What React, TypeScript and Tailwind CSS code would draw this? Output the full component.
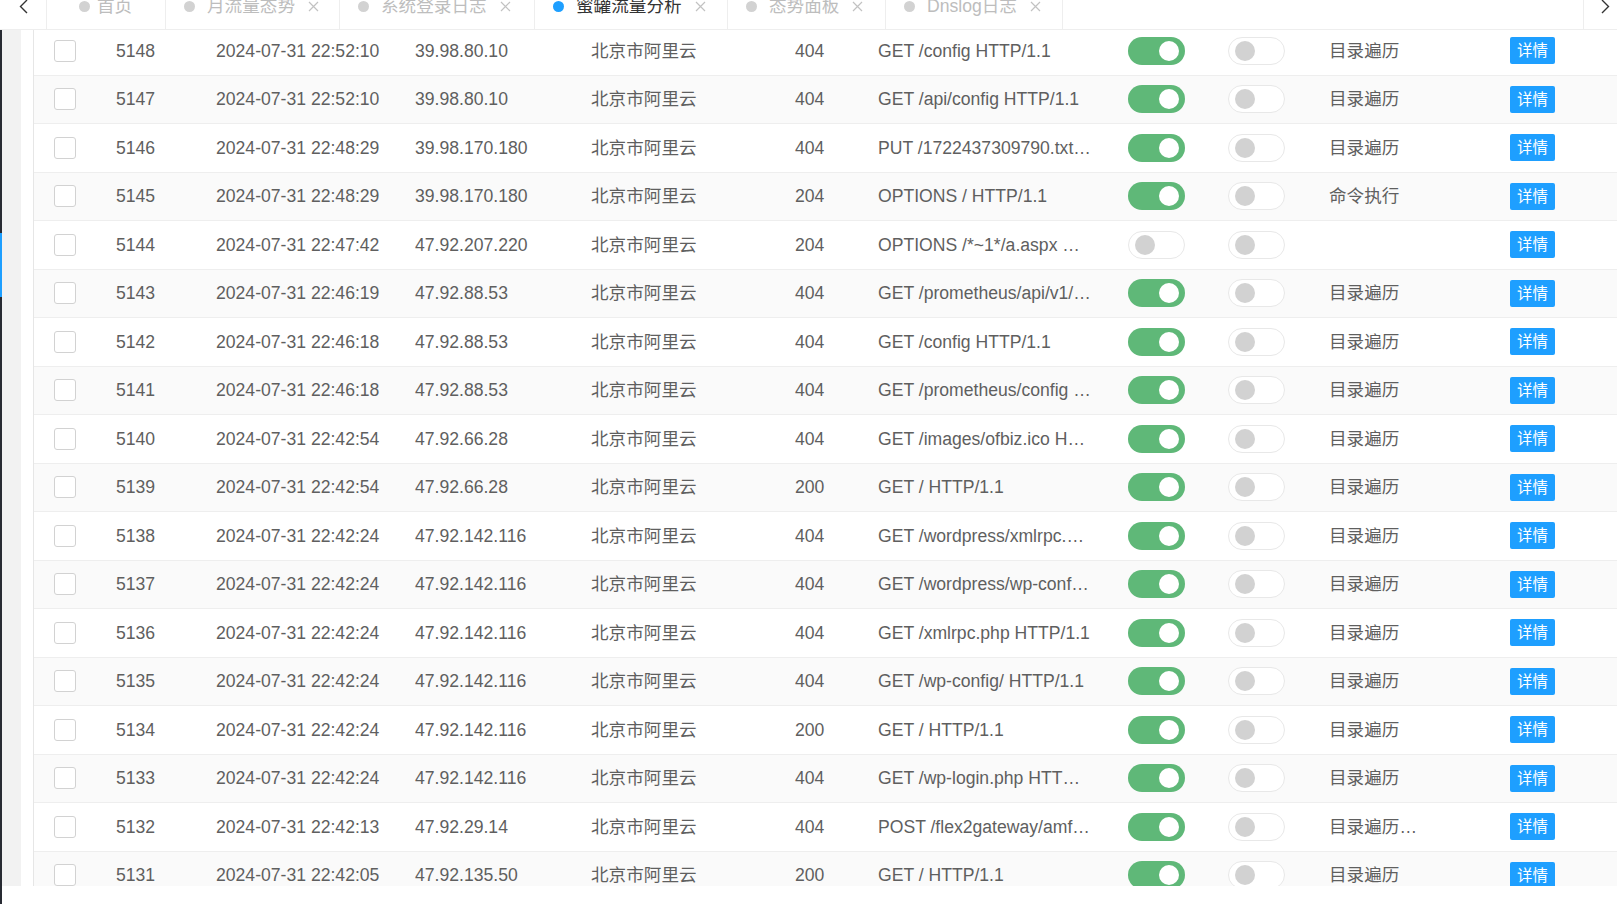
import React from "react";

type Row = {
  id: number;
  time: string;
  ip: string;
  loc: string;
  status: number;
  req: string;
  alarm: boolean;
  attack: string;
};

const rows: Row[] = [
  { id: 5148, time: "2024-07-31 22:52:10", ip: "39.98.80.10", loc: "北京市阿里云", status: 404, req: "GET /config HTTP/1.1", alarm: true, attack: "目录遍历" },
  { id: 5147, time: "2024-07-31 22:52:10", ip: "39.98.80.10", loc: "北京市阿里云", status: 404, req: "GET /api/config HTTP/1.1", alarm: true, attack: "目录遍历" },
  { id: 5146, time: "2024-07-31 22:48:29", ip: "39.98.170.180", loc: "北京市阿里云", status: 404, req: "PUT /1722437309790.txt HTTP/1.1", alarm: true, attack: "目录遍历" },
  { id: 5145, time: "2024-07-31 22:48:29", ip: "39.98.170.180", loc: "北京市阿里云", status: 204, req: "OPTIONS / HTTP/1.1", alarm: true, attack: "命令执行" },
  { id: 5144, time: "2024-07-31 22:47:42", ip: "47.92.207.220", loc: "北京市阿里云", status: 204, req: "OPTIONS /*~1*/a.aspx HTTP/1.1", alarm: false, attack: "" },
  { id: 5143, time: "2024-07-31 22:46:19", ip: "47.92.88.53", loc: "北京市阿里云", status: 404, req: "GET /prometheus/api/v1/label/__name__/values HTTP/1.1", alarm: true, attack: "目录遍历" },
  { id: 5142, time: "2024-07-31 22:46:18", ip: "47.92.88.53", loc: "北京市阿里云", status: 404, req: "GET /config HTTP/1.1", alarm: true, attack: "目录遍历" },
  { id: 5141, time: "2024-07-31 22:46:18", ip: "47.92.88.53", loc: "北京市阿里云", status: 404, req: "GET /prometheus/config HTTP/1.1", alarm: true, attack: "目录遍历" },
  { id: 5140, time: "2024-07-31 22:42:54", ip: "47.92.66.28", loc: "北京市阿里云", status: 404, req: "GET /images/ofbiz.ico HTTP/1.1", alarm: true, attack: "目录遍历" },
  { id: 5139, time: "2024-07-31 22:42:54", ip: "47.92.66.28", loc: "北京市阿里云", status: 200, req: "GET / HTTP/1.1", alarm: true, attack: "目录遍历" },
  { id: 5138, time: "2024-07-31 22:42:24", ip: "47.92.142.116", loc: "北京市阿里云", status: 404, req: "GET /wordpress/xmlrpc.php HTTP/1.1", alarm: true, attack: "目录遍历" },
  { id: 5137, time: "2024-07-31 22:42:24", ip: "47.92.142.116", loc: "北京市阿里云", status: 404, req: "GET /wordpress/wp-config.php HTTP/1.1", alarm: true, attack: "目录遍历" },
  { id: 5136, time: "2024-07-31 22:42:24", ip: "47.92.142.116", loc: "北京市阿里云", status: 404, req: "GET /xmlrpc.php HTTP/1.1", alarm: true, attack: "目录遍历" },
  { id: 5135, time: "2024-07-31 22:42:24", ip: "47.92.142.116", loc: "北京市阿里云", status: 404, req: "GET /wp-config/ HTTP/1.1", alarm: true, attack: "目录遍历" },
  { id: 5134, time: "2024-07-31 22:42:24", ip: "47.92.142.116", loc: "北京市阿里云", status: 200, req: "GET / HTTP/1.1", alarm: true, attack: "目录遍历" },
  { id: 5133, time: "2024-07-31 22:42:24", ip: "47.92.142.116", loc: "北京市阿里云", status: 404, req: "GET /wp-login.php HTTP/1.1", alarm: true, attack: "目录遍历" },
  { id: 5132, time: "2024-07-31 22:42:13", ip: "47.92.29.14", loc: "北京市阿里云", status: 404, req: "POST /flex2gateway/amf HTTP/1.1", alarm: true, attack: "目录遍历，命令执行" },
  { id: 5131, time: "2024-07-31 22:42:05", ip: "47.92.135.50", loc: "北京市阿里云", status: 200, req: "GET / HTTP/1.1", alarm: true, attack: "目录遍历" },
];

const tabs = [
  { name: "首页", width: "w-[119px]", closable: false, active: false },
  { name: "月流量态势", width: "w-[174px]", closable: true, active: false },
  { name: "系统登录日志", width: "w-[195px]", closable: true, active: false },
  { name: "蜜罐流量分析", width: "w-[193px]", closable: true, active: true },
  { name: "态势面板", width: "w-[158px]", closable: true, active: false },
  { name: "Dnslog日志", width: "w-[177px]", closable: true, active: false },
];

function Toggle({ on }: { on: boolean }) {
  if (on) {
    return (
      <div className="flex h-[28px] w-[57px] items-center justify-end rounded-full bg-[#5fb878] pr-[6px]">
        <div className="h-[20px] w-[20px] rounded-full bg-white" />
      </div>
    );
  }
  return (
    <div className="flex h-[28px] w-[57px] items-center rounded-full border border-[#e8e8e8] bg-white pl-[6px]">
      <div className="h-[20px] w-[20px] rounded-full bg-[#d2d2d2]" />
    </div>
  );
}

function CloseIcon() {
  return (
    <svg width="11" height="11" viewBox="0 0 11 11" className="ml-[13px] shrink-0">
      <path d="M1 1 L10 10 M10 1 L1 10" stroke="#c2c2c2" strokeWidth="1.2" />
    </svg>
  );
}

function TabBar() {
  return (
    <div className="h-[30px] shrink-0 overflow-hidden border-b border-[#eee] bg-white">
      <div className="-mt-[16px] flex h-[45px] items-center">
        <div className="flex h-full w-[47px] shrink-0 items-center justify-center border-r border-[#eee]">
          <svg width="9" height="15" viewBox="0 0 9 15">
            <path d="M8 1 L1.5 7.5 L8 14" fill="none" stroke="#333" strokeWidth="1.4" />
          </svg>
        </div>
        {tabs.map((t, i) => (
          <div
            key={t.name}
            className={`flex h-full shrink-0 items-center border-r border-[#eee] ${t.width} ${i === 0 ? "pl-[32px]" : "pl-[18px]"}`}
          >
            <span className={`h-[11px] w-[11px] shrink-0 rounded-full ${t.active ? "bg-[#1e9fff]" : "bg-[#d2d2d2]"}`} />
            <span className={`${i === 0 ? "ml-[7px]" : "ml-[12px]"} whitespace-nowrap ${t.active ? "text-[#333]" : "text-[#bdbdbd]"}`}>
              {t.name}
            </span>
            {t.closable && <CloseIcon />}
          </div>
        ))}
        <div className="h-full flex-1" />
        <div className="flex h-full w-[34px] shrink-0 items-center justify-end border-l border-[#eee] pr-[7px]">
          <svg width="9" height="15" viewBox="0 0 9 15">
            <path d="M1 1 L7.5 7.5 L1 14" fill="none" stroke="#333" strokeWidth="1.4" />
          </svg>
        </div>
      </div>
    </div>
  );
}

function TableRow({ row, striped }: { row: Row; striped: boolean }) {
  return (
    <div className={`flex h-[48.5px] items-center border-b border-[#eee] ${striped ? "bg-[#fafafa]" : "bg-white"}`}>
      <div className="w-[82px] shrink-0 pl-[20px]">
        <div className="h-[22px] w-[22px] rounded-[3px] border border-[#d2d2d2] bg-white" />
      </div>
      <div className="w-[100px] shrink-0">{row.id}</div>
      <div className="w-[199px] shrink-0">{row.time}</div>
      <div className="w-[176px] shrink-0">{row.ip}</div>
      <div className="w-[204px] shrink-0">{row.loc}</div>
      <div className="w-[83px] shrink-0">{row.status}</div>
      <div className="w-[250px] shrink-0">
        <div className="max-w-[213.6px] truncate">{row.req}</div>
      </div>
      <div className="w-[100px] shrink-0">
        <Toggle on={row.alarm} />
      </div>
      <div className="w-[101px] shrink-0">
        <Toggle on={false} />
      </div>
      <div className="w-[181px] shrink-0">
        <div className="max-w-[92px] truncate">{row.attack}</div>
      </div>
      <div className="shrink-0">
        <button className="flex h-[27px] w-[45px] items-center justify-center rounded-[2px] bg-[#1e9fff] text-[15.4px] text-white">
          详情
        </button>
      </div>
    </div>
  );
}

export default function App() {
  return (
    <div className="flex h-[904px] w-[1617px] flex-col overflow-hidden bg-white font-['Liberation_Sans','Noto_Sans_CJK_SC',sans-serif] text-[17.6px] text-[#5f5f5f]">
      <TabBar />
      <div className="flex min-h-0 flex-1">
        <div className="flex w-[2px] shrink-0 flex-col bg-[#282b33]">
          <div className="h-[203px]" />
          <div className="h-[64px] bg-[#1e9fff]" />
        </div>
        <div className="flex min-w-0 flex-1 flex-col">
          <div className="flex h-[856px] shrink-0">
            <div className="w-[19px] shrink-0 bg-[#f2f2f2]" />
            <div className="w-[12px] shrink-0 bg-white" />
            <div className="min-w-0 flex-1 overflow-hidden border-l border-[#e6e6e6]">
              <div className="-mt-[3px]">
                {rows.map((r, i) => (
                  <TableRow key={r.id} row={r} striped={i % 2 === 1} />
                ))}
              </div>
            </div>
          </div>
          <div className="flex-1 bg-white" />
        </div>
      </div>
    </div>
  );
}
